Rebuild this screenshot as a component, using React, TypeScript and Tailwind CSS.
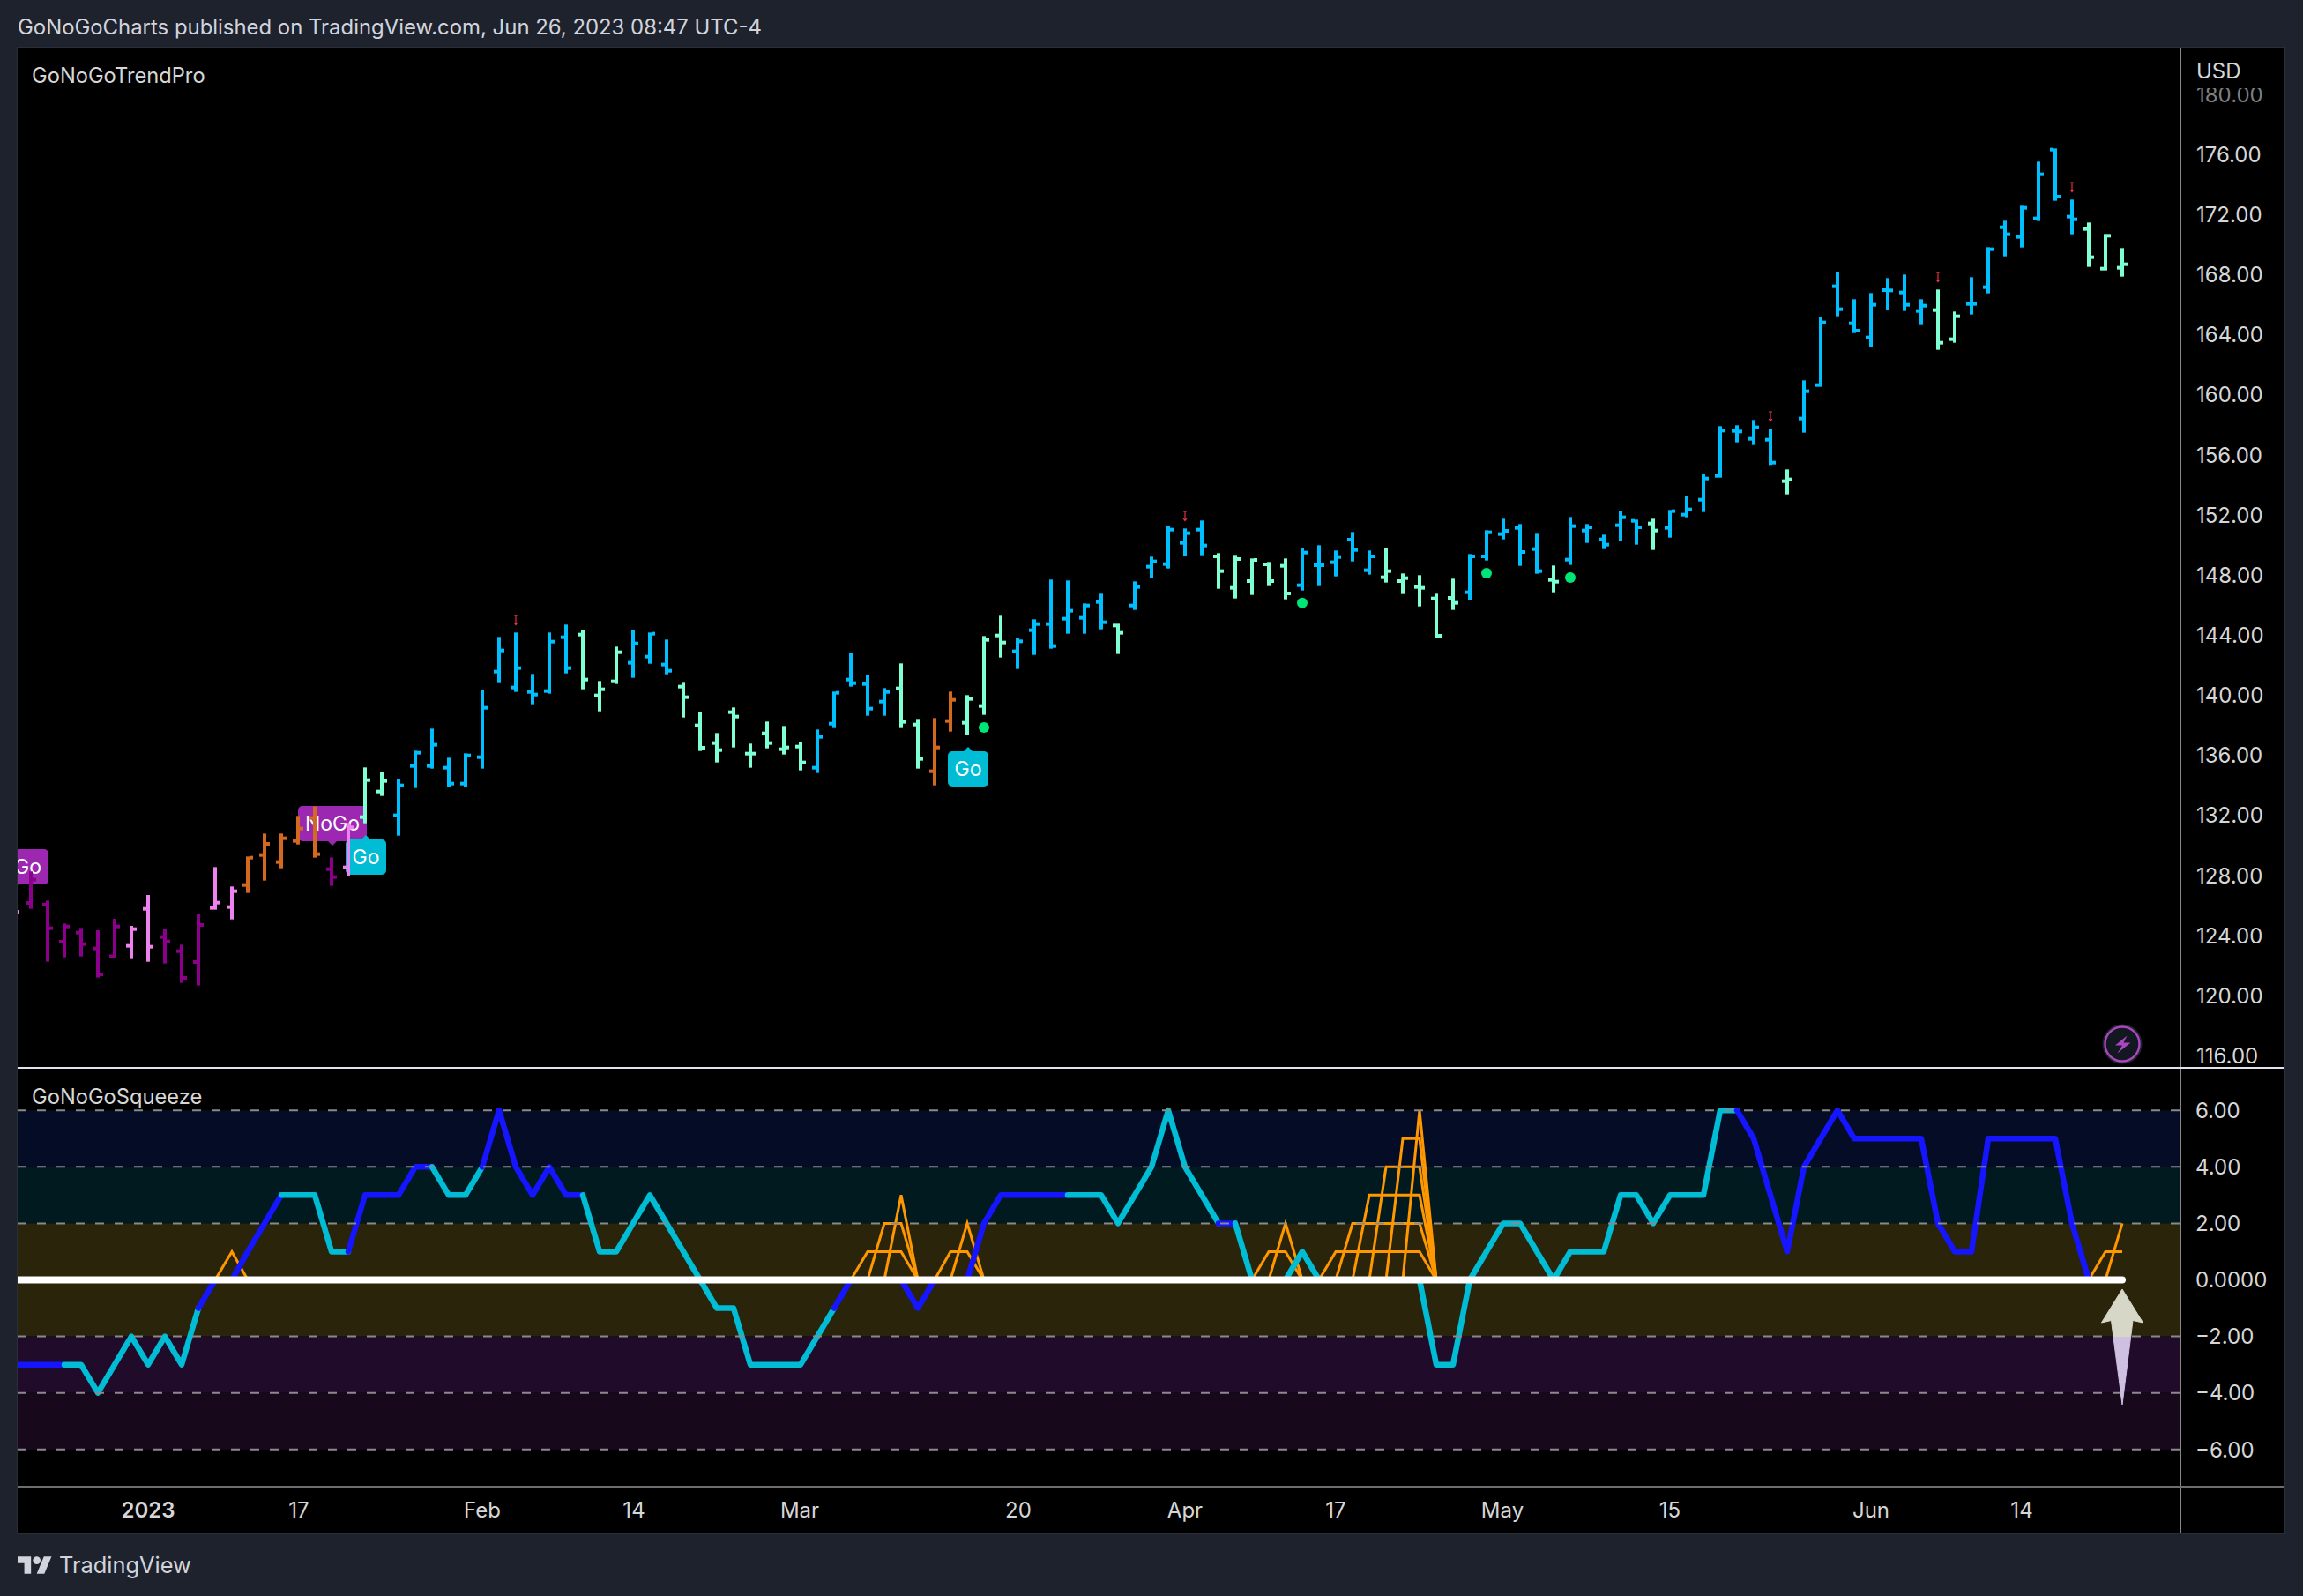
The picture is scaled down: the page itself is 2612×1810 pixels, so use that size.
import React from "react";

type Row = [number, number, number, number, string];

const COLORS: Record<string, string> = {
  b: "#00bfff",
  a: "#7fffd4",
  o: "#d2691e",
  p: "#8b008b",
  v: "#ee82ee",
};

const barX = (i: number) => Math.round(34.8 + 18.976 * i);
const levelY = (v: number) => 1451.5 - v * 32.05;

// each block: first index, y origin, rows of high, low, open, close at 3x
const BLOCKS: { from: number; base: number; rows: Row[] }[] = [
  {
    from: -1,
    base: 620,
    rows: [
      [1200, 1290, 1242, 1242, "v"],
      [1105, 1232, 1212, 1133, "p"],
      [1204, 1412, 1218, 1298, "p"],
      [1282, 1397, 1344, 1292, "p"],
      [1297, 1394, 1313, 1352, "p"],
      [1305, 1466, 1367, 1455, "p"],
      [1266, 1400, 1394, 1292, "p"],
      [1290, 1403, 1358, 1301, "v"],
      [1185, 1412, 1232, 1361, "v"],
      [1300, 1418, 1328, 1343, "p"],
      [1354, 1484, 1376, 1467, "p"],
      [1251, 1493, 1413, 1287, "p"],
      [1090, 1235, 1229, 1211, "v"],
      [1156, 1268, 1226, 1172, "v"],
      [1054, 1178, 1151, 1058, "o"],
      [976, 1136, 1049, 1011, "o"],
      [976, 1094, 1073, 992, "o"],
      [916, 1013, 1001, 959, "o"],
      [883, 1058, 923, 1046, "o"],
      [1057, 1154, 1097, 1124, "p"],
      [940, 1121, 1091, 955, "v"],
      [751, 941, 920, 794, "a"],
      [766, 848, 833, 797, "a"],
      [790, 983, 914, 812, "b"],
      [694, 821, 746, 701, "b"],
      [619, 755, 746, 674, "b"],
      [718, 818, 752, 806, "b"],
      [703, 818, 806, 710, "b"],
      [487, 755, 716, 548, "b"],
      [307, 464, 425, 353, "b"],
      [292, 494, 479, 413, "b"],
      [433, 536, 494, 503, "b"],
      [292, 500, 491, 323, "b"],
      [265, 431, 308, 413, "b"],
      [283, 485, 299, 452, "a"],
      [457, 560, 506, 485, "a"],
    ],
  },
  {
    from: 35,
    base: 520,
    rows: [
      [640, 767, 758, 659, "a"],
      [583, 746, 695, 629, "b"],
      [592, 698, 674, 596, "b"],
      [616, 734, 701, 722, "b"],
      [763, 881, 776, 812, "a"],
      [862, 995, 908, 984, "a"],
      [934, 1034, 968, 992, "a"],
      [847, 983, 863, 878, "a"],
      [970, 1052, 1004, 1004, "a"],
      [895, 986, 935, 968, "a"],
      [910, 1007, 989, 983, "a"],
      [964, 1061, 980, 1034, "a"],
      [922, 1070, 1052, 947, "b"],
      [793, 917, 902, 797, "b"],
      [661, 776, 752, 764, "b"],
      [736, 875, 767, 851, "b"],
      [781, 875, 827, 794, "b"],
      [697, 917, 782, 896, "a"],
      [886, 1055, 905, 1022, "a"],
      [883, 1112, 1064, 983, "o"],
      [793, 929, 893, 821, "o"],
      [805, 941, 899, 818, "a"],
      [604, 872, 842, 617, "a"],
      [535, 677, 602, 626, "a"],
      [610, 716, 656, 622, "b"],
      [547, 668, 584, 563, "b"],
      [412, 647, 563, 638, "b"],
      [415, 596, 545, 518, "b"],
      [493, 596, 542, 500, "b"],
      [460, 581, 488, 557, "b"],
      [562, 665, 568, 593, "a"],
      [418, 515, 500, 437, "b"],
      [334, 407, 368, 350, "b"],
      [229, 374, 359, 242, "b"],
      [238, 332, 287, 254, "b"],
      [211, 329, 242, 296, "b"],
    ],
  },
  {
    from: 71,
    base: 500,
    rows: [
      [382, 503, 393, 443, "a"],
      [388, 536, 500, 402, "a"],
      [400, 524, 477, 405, "a"],
      [412, 494, 420, 477, "a"],
      [400, 539, 425, 519, "a"],
      [364, 509, 491, 380, "b"],
      [355, 494, 423, 423, "b"],
      [373, 461, 413, 395, "b"],
      [310, 410, 336, 371, "b"],
      [373, 455, 440, 393, "b"],
      [364, 482, 464, 443, "a"],
      [451, 521, 477, 467, "a"],
      [457, 563, 497, 500, "a"],
      [520, 670, 536, 663, "a"],
      [469, 575, 534, 551, "a"],
      [385, 542, 515, 393, "b"],
      [304, 407, 393, 311, "b"],
      [265, 335, 317, 306, "b"],
      [283, 425, 296, 378, "b"],
      [316, 452, 368, 443, "b"],
      [424, 515, 473, 479, "a"],
      [259, 422, 404, 290, "b"],
      [283, 347, 305, 294, "b"],
      [319, 368, 335, 353, "b"],
      [238, 341, 287, 260, "b"],
      [268, 353, 272, 294, "b"],
      [265, 371, 281, 305, "a"],
      [235, 329, 296, 239, "b"],
    ],
  },
  {
    from: 99,
    base: 130,
    rows: [
      [1297, 1370, 1361, 1343, "b"],
      [1222, 1352, 1310, 1238, "b"],
      [1060, 1235, 1229, 1075, "b"],
      [1057, 1115, 1076, 1078, "b"],
      [1039, 1124, 1103, 1064, "b"],
      [1069, 1192, 1106, 1184, "b"],
      [1207, 1292, 1247, 1241, "a"],
      [904, 1082, 1034, 941, "b"],
      [688, 926, 920, 707, "b"],
      [535, 686, 584, 662, "b"],
      [628, 743, 710, 735, "b"],
      [607, 791, 758, 647, "b"],
      [556, 665, 597, 598, "b"],
      [544, 668, 605, 647, "b"],
      [628, 716, 668, 650, "b"],
      [595, 800, 665, 776, "a"],
      [670, 776, 764, 686, "a"],
      [553, 680, 644, 644, "b"],
      [451, 608, 587, 458, "b"],
      [361, 482, 383, 407, "b"],
      [310, 452, 416, 317, "b"],
      [160, 362, 353, 203, "b"],
      [115, 293, 119, 279, "b"],
      [289, 407, 347, 356, "b"],
      [367, 518, 389, 485, "a"],
      [406, 530, 524, 412, "a"],
      [454, 551, 521, 509, "a"],
    ],
  },
];

const DOTS = [
  [57, 825],
  [76, 683.7],
  [87, 650],
  [92, 655],
];

const MARKERS = [
  [29, 698],
  [69, 580],
  [104, 467],
  [114, 309],
  [122, 207],
];

// squeeze line, first value belongs to bar -1
const LINE = [
  -3, -3, -3, -3, -3, -4, -3, -2, -3, -2, -3, -1, 0, 0, 1, 2, 3, 3, 3, 1, 1, 3, 3, 3, 4, 4, 3, 3, 4, 6, 4, 3, 4, 3, 3, 1, 1, 2,
  3, 2, 1, 0, -1, -1, -3, -3, -3, -3, -2, -1, 0, 0, 0, 0, -1, 0, 0, 0, 2, 3, 3, 3, 3, 3, 3, 3, 2, 3, 4, 6, 4, 3, 2, 2, 0, 0, 0,
  1, 0, 0, 0, 0, 0, 0, 0, -3, -3, 0, 1, 2, 2, 1, 0, 1, 1, 1, 3, 3, 2, 3, 3, 3, 6, 6, 5, 3, 1, 4, 5, 6, 5, 5, 5, 5, 5, 2, 1, 1, 5,
  5, 5, 5, 5, 2, 0, 0, 0,
];

const RUNS: [number, number, string][] = [
  [-1, 2, "#1515ff"],
  [2, 10, "#00bcd4"],
  [10, 15, "#1515ff"],
  [15, 19, "#00bcd4"],
  [19, 24, "#1515ff"],
  [24, 27, "#00bcd4"],
  [27, 33, "#1515ff"],
  [33, 48, "#00bcd4"],
  [48, 62, "#1515ff"],
  [62, 71, "#00bcd4"],
  [71, 72, "#1515ff"],
  [72, 102, "#00bcd4"],
  [102, 125, "#1515ff"],
];

const SQUEEZE: Record<number, number> = {
  12: 1,
  50: 1,
  51: 2,
  52: 3,
  55: 1,
  56: 2,
  74: 1,
  75: 2,
  78: 1,
  79: 2,
  80: 3,
  81: 4,
  82: 5,
  83: 6,
  124: 1,
  125: 2,
};

const BANDS = [
  { from: 6, to: 4, fill: "#050c26" },
  { from: 4, to: 2, fill: "#011a20" },
  { from: 2, to: -2, fill: "#2a240b" },
  { from: -2, to: -4, fill: "#200b2a" },
  { from: -4, to: -6, fill: "#18081c" },
];

const PRICES = ["176.00", "172.00", "168.00", "164.00", "160.00", "156.00", "152.00", "148.00", "144.00", "140.00", "136.00", "132.00", "128.00", "124.00", "120.00", "116.00"];
const LEVELS = ["6.00", "4.00", "2.00", "0.0000", "−2.00", "−4.00", "−6.00"];
const TICKS: [string, number, boolean?][] = [
  ["2023", 168, true],
  ["17", 339],
  ["Feb", 547],
  ["14", 719],
  ["Mar", 907],
  ["20", 1155],
  ["Apr", 1344],
  ["17", 1515],
  ["May", 1704],
  ["15", 1894],
  ["Jun", 2122],
  ["14", 2293],
];

const Bars = () => (
  <svg viewBox="20 54 2452 1156" className="absolute inset-0 w-[2452px] h-[1156px]">
    {BLOCKS.flatMap((block) =>
      block.rows.map((row, n) => {
        const x = barX(block.from + n);
        const [high, low, open, close] = row.slice(0, 4).map((v) => block.base + (v as number) / 3);
        const fill = COLORS[row[4]];
        return (
          <g key={block.from + n} fill={fill}>
            <rect x={x - 2} y={high} width={4} height={low - high} />
            <rect x={x - 6} y={open - 2} width={4} height={4} />
            <rect x={x + 2} y={close - 2} width={4} height={4} />
          </g>
        );
      })
    )}
    {DOTS.map(([i, y]) => (
      <circle key={i} cx={barX(i)} cy={y} r={6} fill="#00e676" />
    ))}
    {MARKERS.map(([i, y]) => {
      const x = barX(i);
      return <path key={i} d={`M${x - 2} ${y}h4M${x} ${y}v10.5M${x - 2} ${y + 8}l2 2.5l2 -2.5`} fill="none" stroke="#f23645" strokeWidth={1.1} />;
    })}
  </svg>
);

const Badge = ({ label, x, y, up }: { label: string; x: number; y: number; up?: boolean }) => (
  <div
    style={{ left: x - 20, top: y - 54 }}
    className={`absolute -translate-x-1/2 h-10 flex items-center justify-center rounded-[5px] text-[23px] text-white ${up ? "w-[46px] bg-[#00bcd4]" : "w-[78px] bg-[#9c27b0]"}`}
  >
    {label}
    <span className={`absolute left-1/2 -translate-x-1/2 w-0 h-0 border-x-[6px] border-x-transparent ${up ? "-top-[5px] border-b-[6px] border-b-[#00bcd4]" : "-bottom-[5px] border-t-[6px] border-t-[#9c27b0]"}`} />
  </div>
);

const Squeeze = () => (
  <svg viewBox="20 1212 2452 473" className="w-[2452px] h-[473px] block">
    <defs>
      <linearGradient id="arrowFill" gradientUnits="userSpaceOnUse" x1="0" y1="1462" x2="0" y2="1593">
        <stop offset="0.412" stopColor="#d7d7c7" />
        <stop offset="0.412" stopColor="#cfbfe0" />
      </linearGradient>
    </defs>
    {BANDS.map((band) => (
      <rect key={band.from} x={20} y={levelY(band.from)} width={2452} height={levelY(band.to) - levelY(band.from)} fill={band.fill} />
    ))}
    {[1, 2, 3, 4, 5, 6].map((k) => (
      <polyline
        key={k}
        fill="none"
        stroke="#ff9800"
        strokeWidth={3}
        points={LINE.map((_, n) => `${barX(n - 1)},${levelY((SQUEEZE[n - 1] ?? 0) >= k ? k : 0)}`).join(" ")}
      />
    ))}
    {RUNS.map(([from, to, color]) => (
      <polyline
        key={from}
        fill="none"
        stroke={color}
        strokeWidth={6.5}
        strokeLinecap="round"
        strokeLinejoin="round"
        points={LINE.slice(from + 1, to + 2)
          .map((v, n) => `${barX(from + n)},${levelY(v)}`)
          .join(" ")}
      />
    ))}
    {[6, 4, 2, -2, -4, -6].map((v) => (
      <line key={v} x1={20} x2={2472} y1={levelY(v)} y2={levelY(v)} stroke="#8a8a8a" strokeWidth={2} strokeDasharray="10 12" />
    ))}
    <line x1={16} x2={barX(125)} y1={levelY(0)} y2={levelY(0)} stroke="#ffffff" strokeWidth={8} strokeLinecap="round" />
    <path d="M2407 1462L2430.5 1500L2419 1497.5L2407 1593L2394.5 1497.5L2383.5 1500Z" fill="url(#arrowFill)" stroke="url(#arrowFill)" strokeWidth={1} strokeLinejoin="round" />
  </svg>
);

const BoltBadge = () => (
  <svg viewBox="0 0 46 46" className="absolute left-[2364px] top-[1107px] w-[46px] h-[46px]">
    <circle cx="23" cy="23" r="21.5" fill="#131722" stroke="#1e222d" strokeWidth="2" />
    <circle cx="23" cy="23" r="19.5" fill="none" stroke="#ab47bc" strokeWidth="2.4" />
    <path d="M28.5 13.5L15 24.5H23L17.5 33.5L32.5 21.5H24.5Z" fill="#ab47bc" />
  </svg>
);

export default function App() {
  return (
    <div className="w-[2612px] h-[1810px] flex flex-col bg-[#1e222d] overflow-hidden [font-family:Inter,sans-serif]">
      <div className="h-[53px] pl-5 pt-[15px] text-[23.9px] leading-[32px] text-[#d1d4dc] whitespace-nowrap">
        GoNoGoCharts published on TradingView.com, Jun 26, 2023 08:47 UTC-4
      </div>

      <div className="ml-[19px] w-[2573px] flex flex-col border border-[#2a2e39] bg-black text-[24px] text-[#d6d6d6]">
        <div className="flex h-[1156px]">
          <div className="relative w-[2452px] overflow-hidden">
            <Badge label="NoGo" x={16} y={963} />
            <Badge label="NoGo" x={377} y={914} />
            <Badge label="Go" x={415} y={952} up />
            <Badge label="Go" x={1098} y={852} up />
            <Bars />
            <div className="absolute left-4 top-4 text-[23.7px] leading-[32px]">GoNoGoTrendPro</div>
            <BoltBadge />
          </div>
          <div className="relative w-[119px] border-l-2 border-[#868686] overflow-hidden">
            <div className="absolute inset-x-0 top-0 h-[46px] pl-[17px] pt-[11px] leading-[32px] bg-black z-10">USD</div>
            <div className="flex flex-col pl-[17px] pt-[19.5px]">
              <div className="h-[68.17px] flex items-center text-[#7f7f7f]">180.00</div>
              {PRICES.map((p) => (
                <div key={p} className="h-[68.17px] flex items-center">
                  {p}
                </div>
              ))}
            </div>
          </div>
        </div>

        <div className="h-0.5 bg-[#e0e3eb]" />

        <div className="flex h-[473px]">
          <div className="relative w-[2452px]">
            <Squeeze />
            <div className="absolute left-4 top-4 text-[23.7px] leading-[32px]">GoNoGoSqueeze</div>
          </div>
          <div className="w-[119px] border-l-2 border-[#868686] pl-4 pt-4 flex flex-col">
            {LEVELS.map((l) => (
              <div key={l} className="h-[64.08px] flex items-center">
                {l}
              </div>
            ))}
          </div>
        </div>

        <div className="h-0.5 bg-[#6e6e6e]" />

        <div className="flex h-[52px]">
          <div className="relative w-[2452px]">
            {TICKS.map(([text, x, bold]) => (
              <span key={text + x} style={{ left: x - 20 }} className={`absolute top-[10px] -translate-x-1/2 leading-[32px] ${bold ? "font-semibold" : ""}`}>
                {text}
              </span>
            ))}
          </div>
          <div className="w-[119px] border-l-2 border-[#868686]" />
        </div>
      </div>

      <div className="flex-1 pl-5 flex items-center gap-2 text-[#d1d4dc]">
        <svg viewBox="0 4 36 18" className="w-[39px] h-5" fill="currentColor">
          <path d="M14 22H7V11H0V4h14v18zM28 22h-8l7.5-18h8L28 22z" />
          <circle cx="20" cy="8" r="4" />
        </svg>
        <span className="text-[25.4px] leading-[32px]">TradingView</span>
      </div>
    </div>
  );
}
